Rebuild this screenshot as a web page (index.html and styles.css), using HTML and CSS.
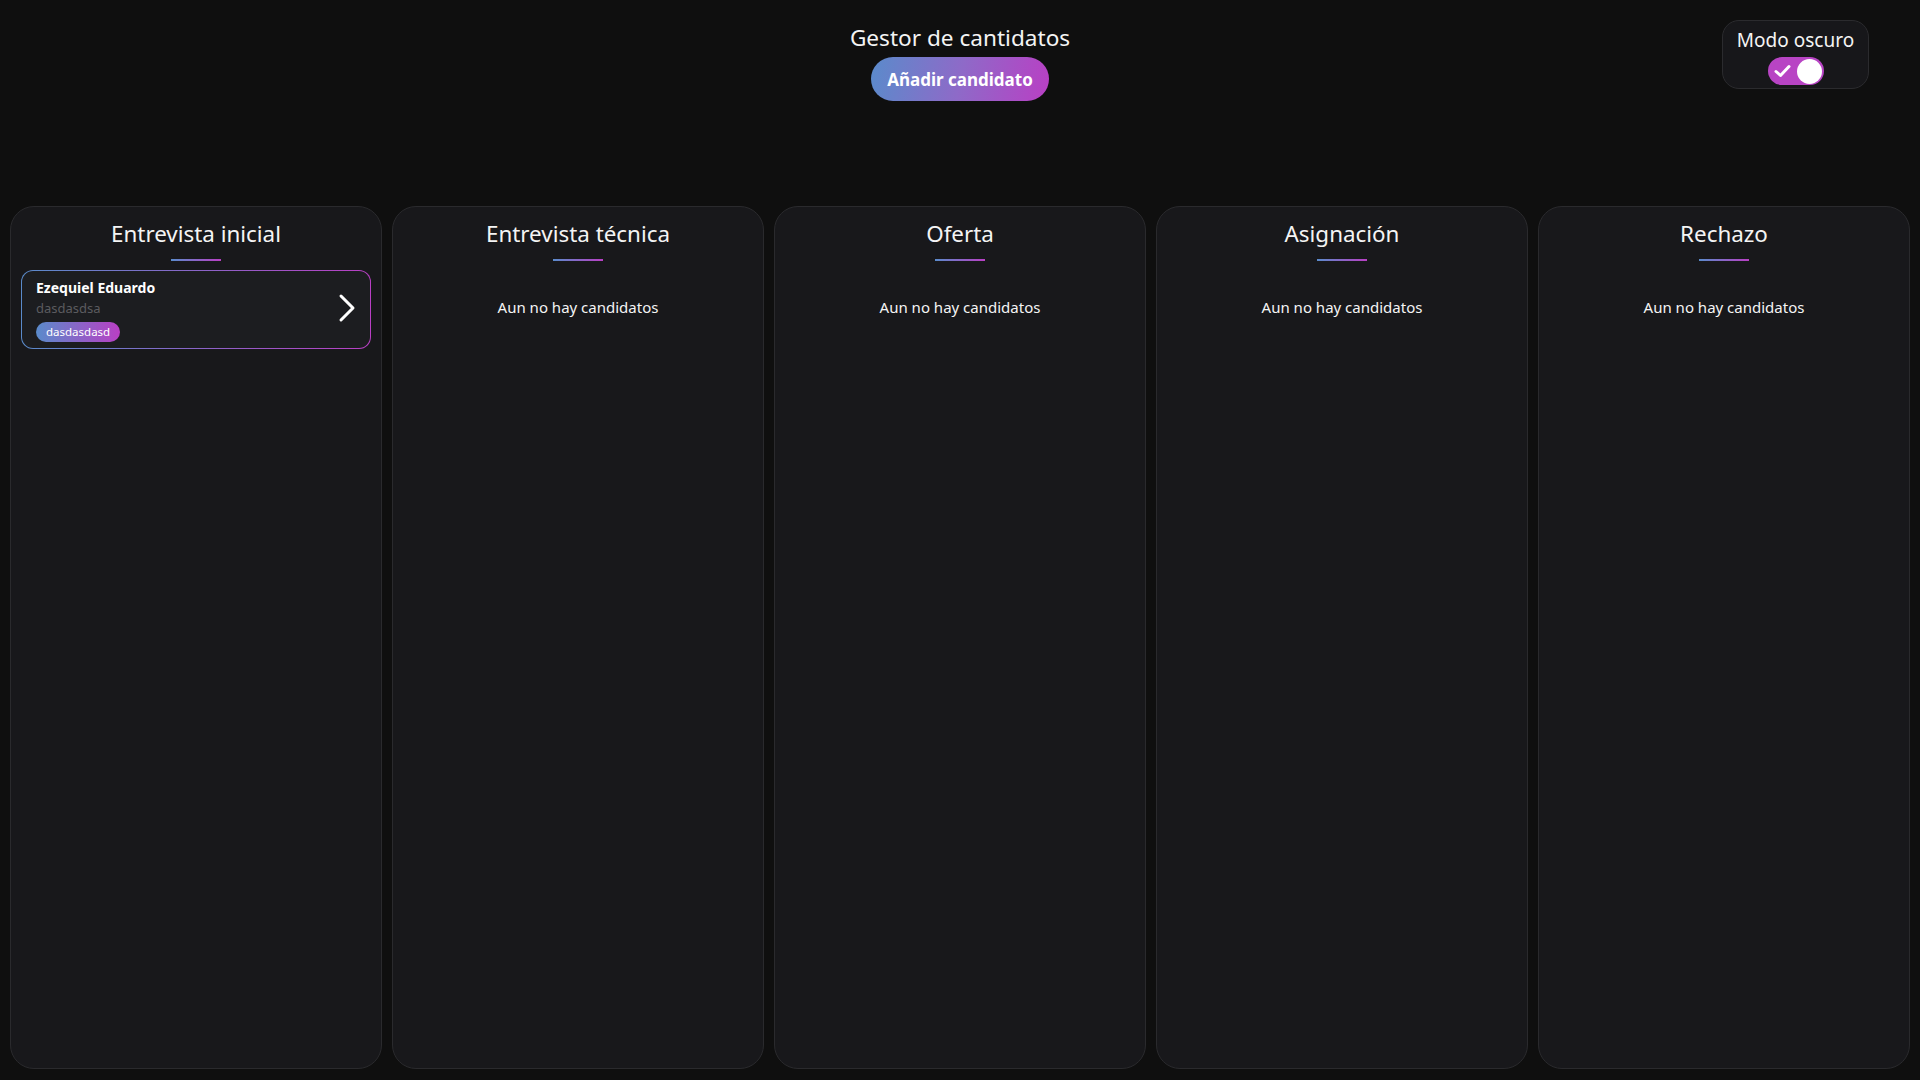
FILE: index.html
```html
<!DOCTYPE html>
<html lang="es">
<head>
<meta charset="utf-8">
<title>Gestor de cantidatos</title>
<link rel="stylesheet" href="styles.css">
</head>
<body>
<div class="app">
  <header class="top">
    <div class="spacer"></div>
    <div class="center">
      <h1 class="title">Gestor de cantidatos</h1>
      <button class="add-btn">Añadir candidato</button>
    </div>
    <div class="right">
      <div class="theme-box">
        <span class="theme-label">Modo oscuro</span>
        <span class="switch">
          <svg class="check" width="17" height="14" viewBox="0 0 17 14"><polyline points="2,7.5 6.5,11.5 15,2.5" fill="none" stroke="#fff" stroke-width="3" stroke-linecap="round" stroke-linejoin="round"/></svg>
          <span class="knob"></span>
        </span>
      </div>
    </div>
  </header>

  <main class="board">
    <section class="col">
      <h2 class="col-title">Entrevista inicial</h2>
      <div class="bar"></div>
      <div class="card">
        <div class="card-body">
          <div class="name">Ezequiel Eduardo</div>
          <div class="sub">dasdasdsa</div>
          <span class="tag">dasdasdasd</span>
        </div>
        <svg class="chev" width="18" height="30" viewBox="0 0 18 30"><polyline points="3,3 15,15 3,27" fill="none" stroke="#fff" stroke-width="3" stroke-linecap="round" stroke-linejoin="round"/></svg>
      </div>
    </section>
    <section class="col">
      <h2 class="col-title">Entrevista técnica</h2>
      <div class="bar"></div>
      <p class="empty">Aun no hay candidatos</p>
    </section>
    <section class="col">
      <h2 class="col-title">Oferta</h2>
      <div class="bar"></div>
      <p class="empty">Aun no hay candidatos</p>
    </section>
    <section class="col">
      <h2 class="col-title">Asignación</h2>
      <div class="bar"></div>
      <p class="empty">Aun no hay candidatos</p>
    </section>
    <section class="col">
      <h2 class="col-title">Rechazo</h2>
      <div class="bar"></div>
      <p class="empty">Aun no hay candidatos</p>
    </section>
  </main>
</div>
</body>
</html>
```

FILE: styles.css
```css
* { box-sizing: border-box; }
html, body {
  margin: 0;
  padding: 0;
  background: #0f0f0f;
  color: #f2f2f2;
  font-family: "Noto Sans", "Open Sans", sans-serif;
}
.app {
  width: 1920px;
  height: 1080px;
  padding: 0 10px;
  display: flex;
  flex-direction: column;
}
.top {
  display: grid;
  grid-template-columns: 1fr auto 1fr;
  height: 206px;
}
.center {
  display: flex;
  flex-direction: column;
  align-items: center;
  padding-top: 22px;
}
.title {
  margin: 0;
  font-size: 22.6px;
  font-weight: 400;
  line-height: 32px;
  color: #f4f4f4;
}
.add-btn {
  margin-top: 3px;
  width: 178px;
  height: 44px;
  border: none;
  border-radius: 22px;
  background: linear-gradient(100deg, #5a8bcb 0%, #8e6ac8 50%, #b93fc4 100%);
  color: #fff;
  font-family: inherit;
  font-size: 17px;
  font-weight: 700;
  padding: 0;
}
.right {
  display: flex;
  justify-content: flex-end;
  align-items: flex-start;
  padding-top: 20px;
  padding-right: 41px;
}
.theme-box {
  width: 147px;
  height: 69px;
  border: 1px solid #2b2b2e;
  border-radius: 17px;
  background: #17171a;
  display: flex;
  flex-direction: column;
  align-items: center;
  padding-top: 6px;
}
.theme-label {
  font-size: 19px;
  line-height: 26px;
  color: #f4f4f4;
}
.switch {
  margin-top: 4px;
  width: 56px;
  height: 28px;
  border-radius: 14px;
  background: #b844c4;
  display: flex;
  align-items: center;
  justify-content: space-between;
  padding: 0 2px 0 6px;
}
.knob {
  width: 25px;
  height: 25px;
  border-radius: 50%;
  background: #fff;
}
.board {
  flex: 1;
  display: grid;
  grid-template-columns: repeat(5, 1fr);
  gap: 10px;
  padding-bottom: 11px;
}
.col {
  background: #18181b;
  border: 1px solid #2a2a2d;
  border-radius: 24px;
  padding: 11px 10px;
  display: flex;
  flex-direction: column;
  align-items: center;
}
.col-title {
  margin: 0;
  font-size: 22.4px;
  font-weight: 400;
  line-height: 32px;
  color: #f4f4f4;
}
.bar {
  margin-top: 9px;
  width: 50px;
  height: 2px;
  background: linear-gradient(90deg, #5a8bcb, #b93fc4);
}
.empty {
  margin: 36px 0 0;
  font-size: 15px;
  line-height: 21px;
  color: #f4f4f4;
}
.card {
  margin-top: 9px;
  width: 100%;
  height: 79px;
  border: 1px solid transparent;
  border-radius: 12px;
  background:
    linear-gradient(#1c1d20, #1c1d20) padding-box,
    linear-gradient(90deg, #5a8bcb, #b93fc4) border-box;
  display: flex;
  align-items: center;
  justify-content: space-between;
  padding: 0 14px 0 14px;
}
.card-body {
  display: flex;
  flex-direction: column;
  align-items: flex-start;
}
.name {
  font-size: 14px;
  font-weight: 700;
  line-height: 19px;
  color: #fff;
}
.sub {
  font-size: 13px;
  line-height: 19px;
  color: #5b5b5f;
  margin-top: 2px;
}
.tag {
  margin-top: 4px;
  height: 20px;
  line-height: 20px;
  padding: 0 10px;
  border-radius: 10px;
  font-size: 11.5px;
  color: #fff;
  background: linear-gradient(90deg, #5a8bcb, #b93fc4);
}
.chev {
  margin-top: -4px;
}
```
